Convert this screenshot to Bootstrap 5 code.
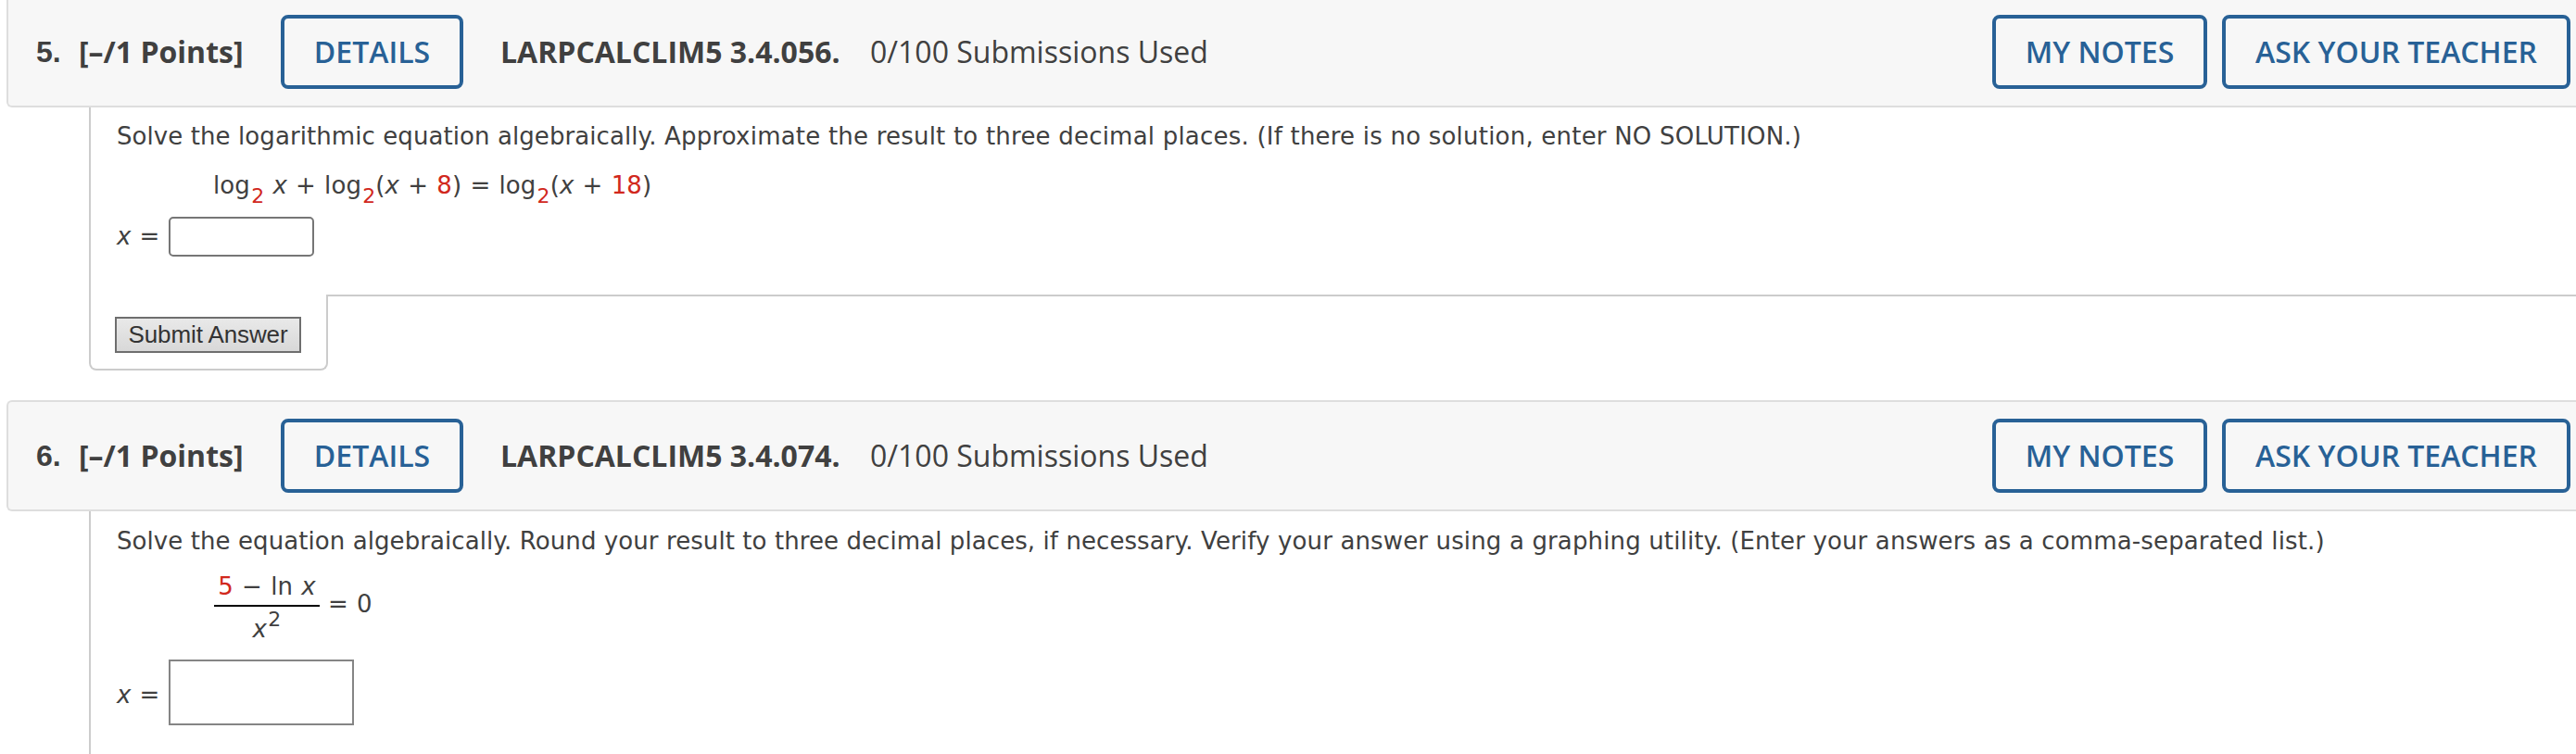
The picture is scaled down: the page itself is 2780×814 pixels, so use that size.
<!DOCTYPE html>
<html lang="en">
<head>
<meta charset="utf-8">
<title>Assignment</title>
<link href="https://cdn.jsdelivr.net/npm/bootstrap@5.3.0/dist/css/bootstrap.min.css" rel="stylesheet">
<style>
body{background:#fff;color:#404040;font-family:"DejaVu Sans",sans-serif;font-size:26px;line-height:32px;height:814px;overflow:hidden}
.q-head{height:120px;margin-left:7px;background:#f7f7f7;border:2px solid #dedede;border-right:0;border-radius:6px 0 0 6px;padding:18px 6px 18px 30px;font-family:"Open Sans",sans-serif;font-size:32px;white-space:nowrap}
.q-first{height:116px;border-top:0;border-top-left-radius:0;padding:16px 6px 18px 30px}
.q-num{font-family:"Liberation Sans",sans-serif;width:46px}
.q-points{width:218px}
.q-code{margin-left:40px;width:399px}
.btn-q{--bs-btn-color:#286196;--bs-btn-border-color:#286196;--bs-btn-border-width:4px;--bs-btn-border-radius:8px;--bs-btn-font-size:32px;--bs-btn-font-weight:600;--bs-btn-font-family:"Open Sans",sans-serif;--bs-btn-padding-x:0;--bs-btn-padding-y:0;height:80px;line-height:72px}
.w-details{width:197px}
.w-notes{width:232px}
.w-ask{width:376px}
.q-body{margin-left:96px;border-left:2px solid #ccc;padding:15px 0 0 28px}
.q-open{height:202px}
.q-last{height:262px;padding-top:16px}
.prompt{white-space:nowrap;letter-spacing:.08px}
.prompt .wide{letter-spacing:.21px}
.prompt .mid{letter-spacing:.14px}
.q-seam{height:2px;margin-left:96px;border-left:2px solid #ccc}
.q-seam div{margin-left:254px;background:#ccc}
.q-tab{margin:0 0 32px 96px;width:258px;height:80px;border:2px solid #ccc;border-top:0;border-radius:0 0 8px 8px;padding:22px 0 0 26px}
.btn-submit{display:block;width:201px;height:39px;border:2px solid #6e6e6e;background:linear-gradient(#e9e9e9,#d8d8d8);font:26px/32px "Liberation Sans",sans-serif;letter-spacing:-.1px;color:#333;padding:0 0 2px}
.math{margin-left:102px;white-space:nowrap;letter-spacing:.1px;word-spacing:.8px}
.math-line{margin:21px 0 18px 104px}
.math-frac{margin:17px 0 17px 105px}
.red{color:#d1281d}
.math sub,.math sup{font-size:22px;line-height:0;margin-left:1.2px;top:0;bottom:0}
.math sub{vertical-align:-10px}
.math sup{vertical-align:12px}
.frac{width:114px}
.frac-top{border-bottom:2px solid #000;padding-bottom:4px}
.frac-bottom{padding-top:8px}
.frac-rest{padding:19px 0 0 9px}
.answer span{width:56px;padding-top:5px;word-spacing:.9px}
.answer-list span{padding-top:22px}
.field{border:2px solid #767676;border-radius:5px;width:157px;height:43px;outline:0;padding:4px}
.field-list{border-color:#858585;border-radius:0;width:200px;height:71px}
</style>
</head>
<body>
<header class="q-head q-first d-flex align-items-center">
  <b class="q-num">5.</b><b class="q-points">[–/1 Points]</b>
  <button class="btn btn-q w-details">DETAILS</button>
  <b class="q-code">LARPCALCLIM5 3.4.056.</b><span>0/100 Submissions Used</span>
  <div class="d-flex gap-3 ms-auto"><button class="btn btn-q w-notes">MY NOTES</button><button class="btn btn-q w-ask">ASK YOUR TEACHER</button></div>
</header>
<section class="q-body q-open">
  <div class="prompt">Solve the logarithmic equation algebraically. <span class="wide">Approximate the result to three decimal places. (If there is no solution, enter NO SOLUTION.)</span></div>
  <div class="math math-line">log<sub class="red">2</sub> <i>x</i> + log<sub class="red">2</sub>(<i>x</i> + <span class="red">8</span>) = log<sub class="red">2</sub>(<i>x</i> + <span class="red">18</span>)</div>
  <div class="answer d-flex"><span><i>x</i> =</span><input class="field" type="text" aria-label="x"></div>
</section>
<div class="q-seam d-flex"><div class="flex-grow-1"></div></div>
<div class="q-tab"><button class="btn-submit">Submit Answer</button></div>

<header class="q-head d-flex align-items-center">
  <b class="q-num">6.</b><b class="q-points">[–/1 Points]</b>
  <button class="btn btn-q w-details">DETAILS</button>
  <b class="q-code">LARPCALCLIM5 3.4.074.</b><span>0/100 Submissions Used</span>
  <div class="d-flex gap-3 ms-auto"><button class="btn btn-q w-notes">MY NOTES</button><button class="btn btn-q w-ask">ASK YOUR TEACHER</button></div>
</header>
<section class="q-body q-last">
  <div class="prompt">Solve the equation algebraically. Round your result to three decimal places, if necessary. <span class="mid">Verify your answer using a graphing utility. (Enter your answers as a comma-separated list.)</span></div>
  <div class="math math-frac d-flex">
    <div class="frac text-center">
      <div class="frac-top"><span class="red">5</span> − ln <i>x</i></div>
      <div class="frac-bottom"><i>x</i><sup>2</sup></div>
    </div>
    <div class="frac-rest">= 0</div>
  </div>
  <div class="answer answer-list d-flex"><span><i>x</i> =</span><input class="field field-list" type="text" aria-label="x"></div>
</section>
<script src="https://cdn.jsdelivr.net/npm/bootstrap@5.3.0/dist/js/bootstrap.bundle.min.js"></script>
</body>
</html>
